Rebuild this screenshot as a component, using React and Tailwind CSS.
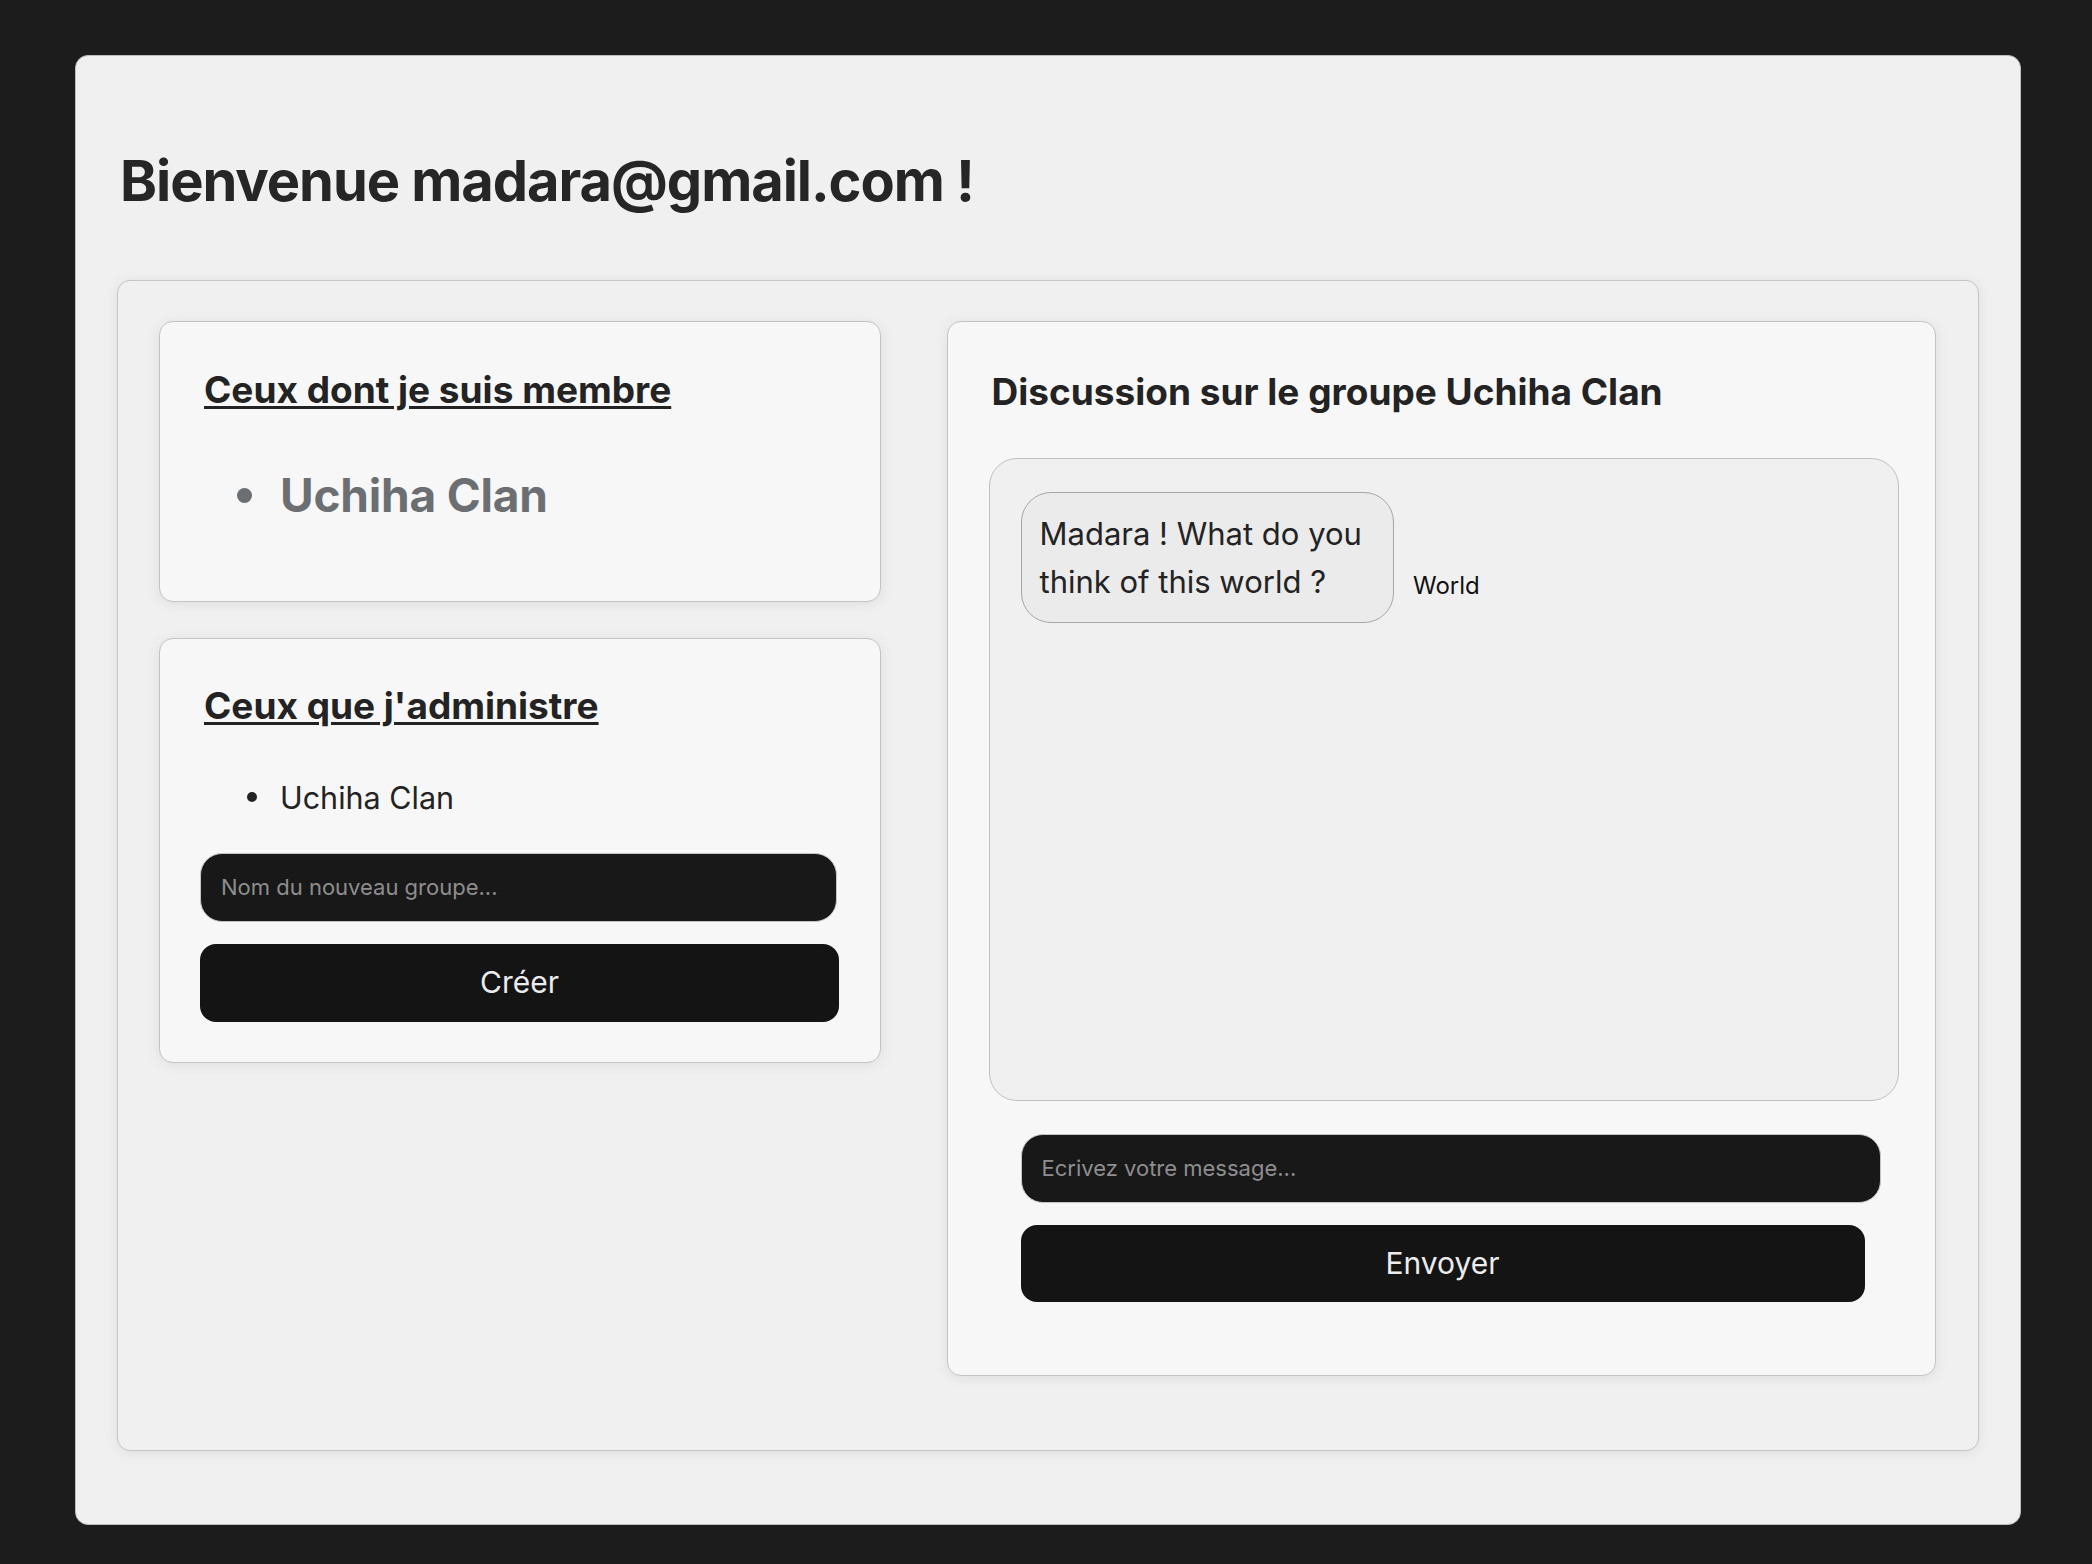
export default function App() {
  return (
    <div className="min-h-screen bg-[#1c1c1c] pt-[55px] pb-[40px] font-['Inter',sans-serif]">
      <div className="ml-[75px] w-[1946px] rounded-[13px] border-[1.5px] border-[#bdbdbd] bg-[#f0f0f0] px-[41px] pt-[90.5px] pb-[73.5px]">
        <h1 className="pl-[3px] text-[56px] leading-[68px] font-bold text-[#262626] tracking-[-1.05px]">
          Bienvenue madara@gmail.com !
        </h1>
        <div className="mt-[65px] flex items-start gap-[66px] rounded-[13px] border-[1.5px] border-[#c4c4c4] bg-[#f0f0f0] px-[41px] pt-[40.5px] pb-[73.5px] shadow-[0_2px_14px_rgba(0,0,0,0.08)]">
          {/* Left column */}
          <div className="flex w-[722px] flex-col gap-[36px]">
            <div className="h-[281px] rounded-[14px] border-[1.5px] border-[#c4c4c4] bg-[#f7f7f7] px-[40px] pt-[45.5px] shadow-[0_2px_14px_rgba(0,0,0,0.08)]">
              <h2 className="pl-[4px] text-[37px] leading-[44px] font-bold text-[#232323] underline decoration-[3px] underline-offset-[3px]">
                Ceux dont je suis membre
              </h2>
              <ul className="mt-[56px]">
                <li className="flex items-center">
                  <span className="ml-[37px] h-[15px] w-[15px] rounded-full bg-[#6b6f72]"></span>
                  <span className="ml-[28px] text-[46px] leading-[55px] font-bold text-[#6b6f72] tracking-[-0.2px]">
                    Uchiha Clan
                  </span>
                </li>
              </ul>
            </div>

            <div className="h-[425px] rounded-[14px] border-[1.5px] border-[#c4c4c4] bg-[#f7f7f7] pl-[40px] pt-[44.5px] shadow-[0_2px_14px_rgba(0,0,0,0.08)]">
              <h2 className="pl-[4px] text-[37px] leading-[44px] font-bold text-[#232323] underline decoration-[3px] underline-offset-[3px]">
                Ceux que j'administre
              </h2>
              <ul className="mt-[51px]">
                <li className="flex items-center">
                  <span className="ml-[47px] h-[10px] w-[10px] rounded-full bg-[#232323]"></span>
                  <span className="ml-[23px] text-[30.5px] leading-[37px] text-[#232323]">
                    Uchiha Clan
                  </span>
                </li>
              </ul>
              <input
                type="text"
                placeholder="Nom du nouveau groupe..."
                className="mt-[37px] block h-[69px] w-[637px] rounded-[22px] border-[1.5px] border-[#c4c4c4] bg-[#181818] pl-[20px] text-[22px] text-[#eeeeee] placeholder:text-[#8e8e8e] outline-none"
              />
              <button className="mt-[22px] block h-[78px] w-[639px] rounded-[16px] bg-[#141414] text-[30px] text-[#ececec]">
                Créer
              </button>
            </div>
          </div>

          {/* Right card */}
          <div className="h-[1055px] w-[989px] rounded-[14px] border-[1.5px] border-[#c4c4c4] bg-[#f7f7f7] pl-[40.5px] pt-[47.5px] shadow-[0_2px_14px_rgba(0,0,0,0.08)]">
            <h2 className="pl-[3px] text-[37px] leading-[44px] font-bold text-[#232323]">
              Discussion sur le groupe Uchiha Clan
            </h2>
            <div className="mt-[44px] h-[643px] w-[910px] rounded-[28px] border-[1.5px] border-[#c0c0c0] bg-[#f0f0f0] pl-[31.5px] pt-[33.5px]">
              <div className="flex items-end">
                <div className="w-[373px] rounded-[30px] border-[1.5px] border-[#a6a6a6] bg-[#ebebeb] px-[17.5px] py-[16.5px] text-[31px] leading-[48px] text-[#232323]">
                  Madara ! What do you think of this world ?
                </div>
                <span className="ml-[19px] mb-[23px] text-[24px] leading-[29px] text-[#111111]">
                  World
                </span>
              </div>
            </div>
            <div className="ml-[32px]">
              <input
                type="text"
                placeholder="Ecrivez votre message..."
                className="mt-[33px] block h-[69px] w-[860px] rounded-[22px] border-[1.5px] border-[#c4c4c4] bg-[#181818] pl-[20px] text-[22px] text-[#eeeeee] placeholder:text-[#8e8e8e] outline-none"
              />
              <button className="mt-[22px] block h-[77px] w-[844px] rounded-[16px] bg-[#141414] text-[30px] text-[#ececec]">
                Envoyer
              </button>
            </div>
          </div>
        </div>
      </div>
    </div>
  );
}
